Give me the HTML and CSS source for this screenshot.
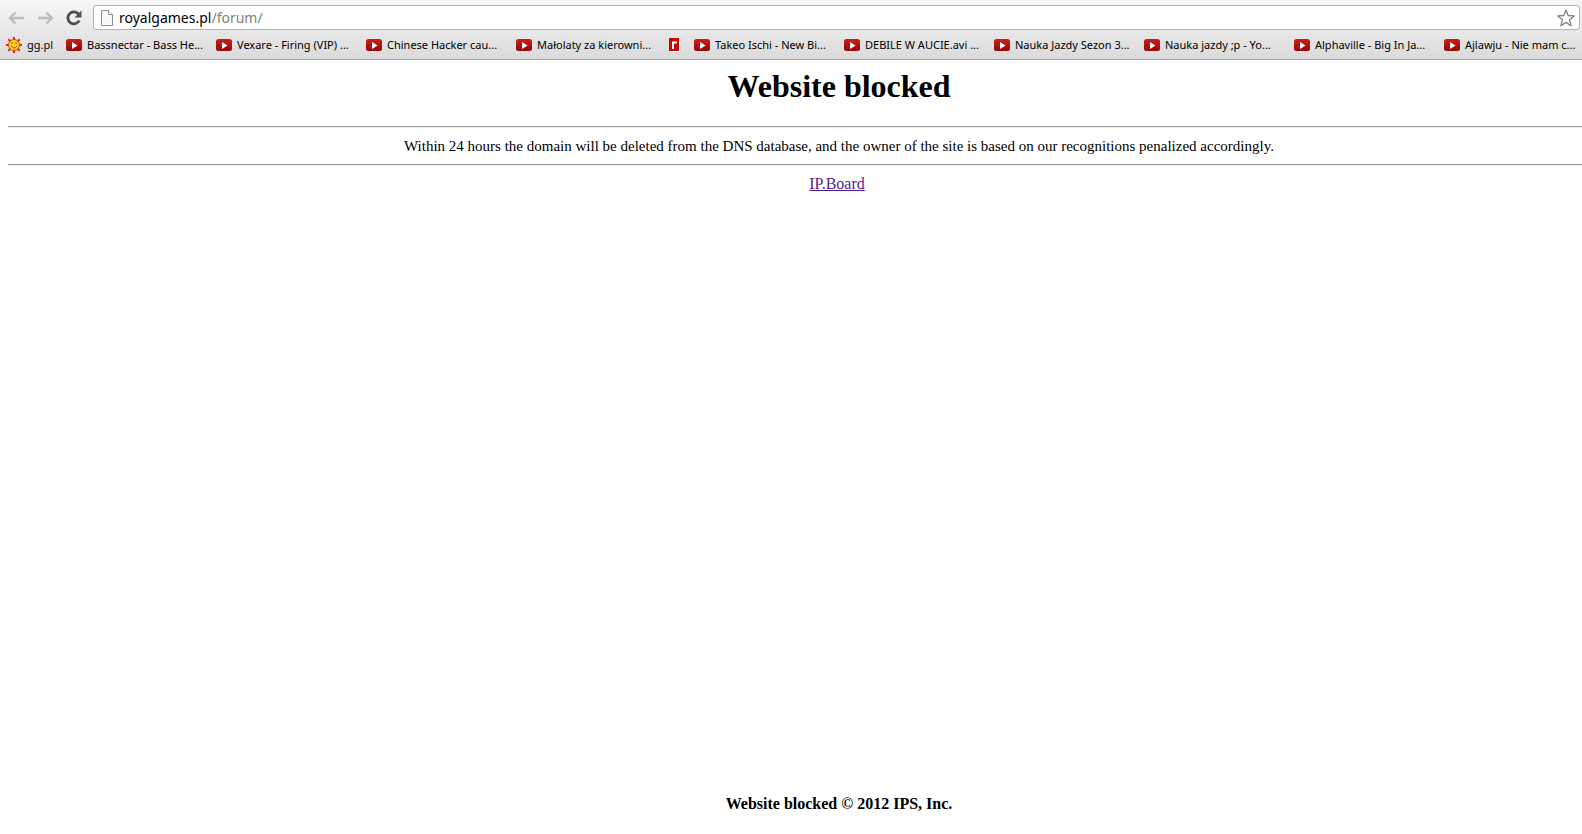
FILE: index.html
```html
<!DOCTYPE html>
<html lang="en">
<head>
<meta charset="utf-8">
<title>Website blocked</title>
<link rel="stylesheet" href="styles.css">
</head>
<body>
<svg class="defs" aria-hidden="true">
  <defs>
    <linearGradient id="red" x1="0" y1="0" x2="0" y2="1"><stop offset="0" stop-color="#cf1d1b"/><stop offset="1" stop-color="#930807"/></linearGradient>
    <symbol id="play" viewBox="0 0 16 12"><rect width="16" height="12" rx="2.500" fill="url(#red)"/><path d="M6 3v7l5.500-3.500z" fill="#fff"/></symbol>
  </defs>
</svg>
<header class="chrome">
  <div class="toolbar">
    <button class="tool" aria-label="Back"><svg width="18" height="16" viewBox="0 0 18 16"><path d="M17 8H3M8.500 2.500 3 8l5.500 5.500" fill="none" stroke="#bdbdbd" stroke-width="2.400"/></svg></button>
    <button class="tool" aria-label="Forward"><svg width="18" height="16" viewBox="0 0 18 16"><path d="M2 8h14M10.500 2.500 16 8l-5.500 5.500" fill="none" stroke="#bdbdbd" stroke-width="2.400"/></svg></button>
    <button class="tool" aria-label="Reload"><svg width="18" height="16" viewBox="0 0 18 16"><path d="M13.500 4A6 6 0 1 0 14.300 10.500" fill="none" stroke="#4d4d4d" stroke-width="2.800"/><path d="M16.500 .5V7.500H9.500z" fill="#4d4d4d"/></svg></button>
    <div class="omnibox">
      <svg width="12" height="16" viewBox="0 0 12 16"><path d="M.5.5h7l4 4v11H.5z" fill="#fafafa" stroke="#8c8c8c"/><path d="M7.500.5v4h4" fill="#fff" stroke="#8c8c8c"/></svg>
      <div class="url" role="textbox" aria-label="Address" contenteditable="true">royalgames.pl<span class="path">/forum/</span></div>
      <button class="star" aria-label="Bookmark this page"><svg width="18" height="18" viewBox="0 0 18 18"><path d="M9 1l2.200 5.500 6 .4-4.700 3.800 1.600 6L9 13.400l-5.100 3.300 1.600-6L.8 6.900l6-.4z" fill="#fff" stroke="#828282" stroke-width="1.300" stroke-linejoin="round"/></svg></button>
    </div>
  </div>
  <nav class="bookmarks" aria-label="Bookmarks">
    <a class="mark short" href="#gg"><svg width="16" height="16" viewBox="0 0 16 16"><path d="M8 0v16M0 8h16M2.300 2.300l11.400 11.400M13.700 2.300 2.300 13.700" stroke="#e02823" stroke-width="2"/><circle cx="8" cy="8" r="5.500" fill="#ffd90f" stroke="#e23a20"/><path d="M5 9q3 4 6 0M6 5v2M10 5v2" fill="none" stroke="#a34a08"/></svg>gg.pl</a>
    <a class="mark" href="#b1"><svg width="16" height="12"><use href="#play"/></svg>Bassnectar - Bass He...</a>
    <a class="mark" href="#b2"><svg width="16" height="12"><use href="#play"/></svg>Vexare - Firing (VIP) ...</a>
    <a class="mark" href="#b3"><svg width="16" height="12"><use href="#play"/></svg>Chinese Hacker cau...</a>
    <a class="mark" href="#b4"><svg width="16" height="12"><use href="#play"/></svg>Małolaty za kierowni...</a>
    <a class="mark icon" href="#b5" aria-label="Bookmark"><svg width="11" height="14" viewBox="0 0 11 14"><path d="M0 0h11v14H0z" fill="#fff"/><path d="M0 0h10v13H0z" fill="#c90606"/><path d="M4 11V4.500h4" fill="none" stroke="#fff" stroke-width="2"/></svg></a>
    <a class="mark" href="#b6"><svg width="16" height="12"><use href="#play"/></svg>Takeo Ischi - New Bi...</a>
    <a class="mark" href="#b7"><svg width="16" height="12"><use href="#play"/></svg>DEBILE W AUCIE.avi ...</a>
    <a class="mark" href="#b8"><svg width="16" height="12"><use href="#play"/></svg>Nauka Jazdy Sezon 3...</a>
    <a class="mark" href="#b9"><svg width="16" height="12"><use href="#play"/></svg>Nauka jazdy ;p - Yo...</a>
    <a class="mark" href="#b10"><svg width="16" height="12"><use href="#play"/></svg>Alphaville - Big In Ja...</a>
    <a class="mark last" href="#b11"><svg width="16" height="12"><use href="#play"/></svg>Ajlawju - Nie mam c...</a>
  </nav>
</header>
<main class="page">
  <h1 class="title">Website blocked</h1>
  <hr class="rule">
  <p class="text notice">Within 24 hours the domain will be deleted from the DNS database, and the owner of the site is based on our recognitions penalized accordingly.</p>
  <hr class="rule">
  <p class="text"><a class="board" href="#board">IP.Board</a>&nbsp;</p>
  <footer class="foot">Website blocked © 2012 IPS, Inc.</footer>
</main>
</body>
</html>
```
FILE: styles.css
```css
* { box-sizing: border-box; }
body {
  margin: 0;
  min-height: 100vh;
  display: flex;
  flex-direction: column;
  background: #fff;
  color: #000;
  font: 16px/20px "Liberation Serif", "Times New Roman", serif;
}
.defs { position: absolute; width: 0; height: 0; }
.chrome {
  padding-top: 5px;
  border-bottom: 1px solid #a0a0a0;
  background: linear-gradient(#f7f7f7, #dadada);
  font-family: "Noto Sans", "Open Sans", sans-serif;
}
.toolbar { display: flex; align-items: center; padding: 0 2px 0 7px; }
.tool {
  width: 29px;
  padding: 0;
  border: 0;
  background: none;
  text-align: left;
}
.tool svg, .star svg { display: block; }
.omnibox {
  flex: 1;
  display: flex;
  align-items: center;
  gap: 6px;
  height: 25px;
  margin-left: -1px;
  padding: 0 4px 0 7px;
  border: 1px solid #b4b4b4;
  border-radius: 3px;
  background: #fff;
}
.url { flex: 1; font-size: 14px; line-height: 22px; outline: 0; }
.path { color: #808080; }
.star { padding: 0; border: 0; background: none; }
.bookmarks { display: flex; height: 29px; padding-left: 6px; overflow: hidden; }
.mark {
  flex: none;
  display: flex;
  align-items: center;
  gap: 5px;
  width: 150px;
  color: #000;
  font-size: 11px;
  line-height: 16px;
  text-decoration: none;
  white-space: nowrap;
}
.short { width: 60px; }
.icon { width: 28px; padding-left: 3px; }
.last { flex: 1; width: auto; }
.page {
  flex: 1;
  display: flex;
  flex-direction: column;
  margin: 8px 0 20px 8px;
  text-align: center;
}
.title, .text, .foot { padding-left: 88px; }
.title { margin: 0 0 21px; font-size: 32px; line-height: 37px; }
.rule {
  width: 100%;
  margin: 0;
  border: 0;
  border-top: 1px solid #999;
  border-bottom: 1px solid #eee;
}
.text { margin: 8px 0; }
.notice { font-size: 15px; }
.board { color: #551a8b; }
.foot { margin-top: auto; font-weight: bold; }
```
